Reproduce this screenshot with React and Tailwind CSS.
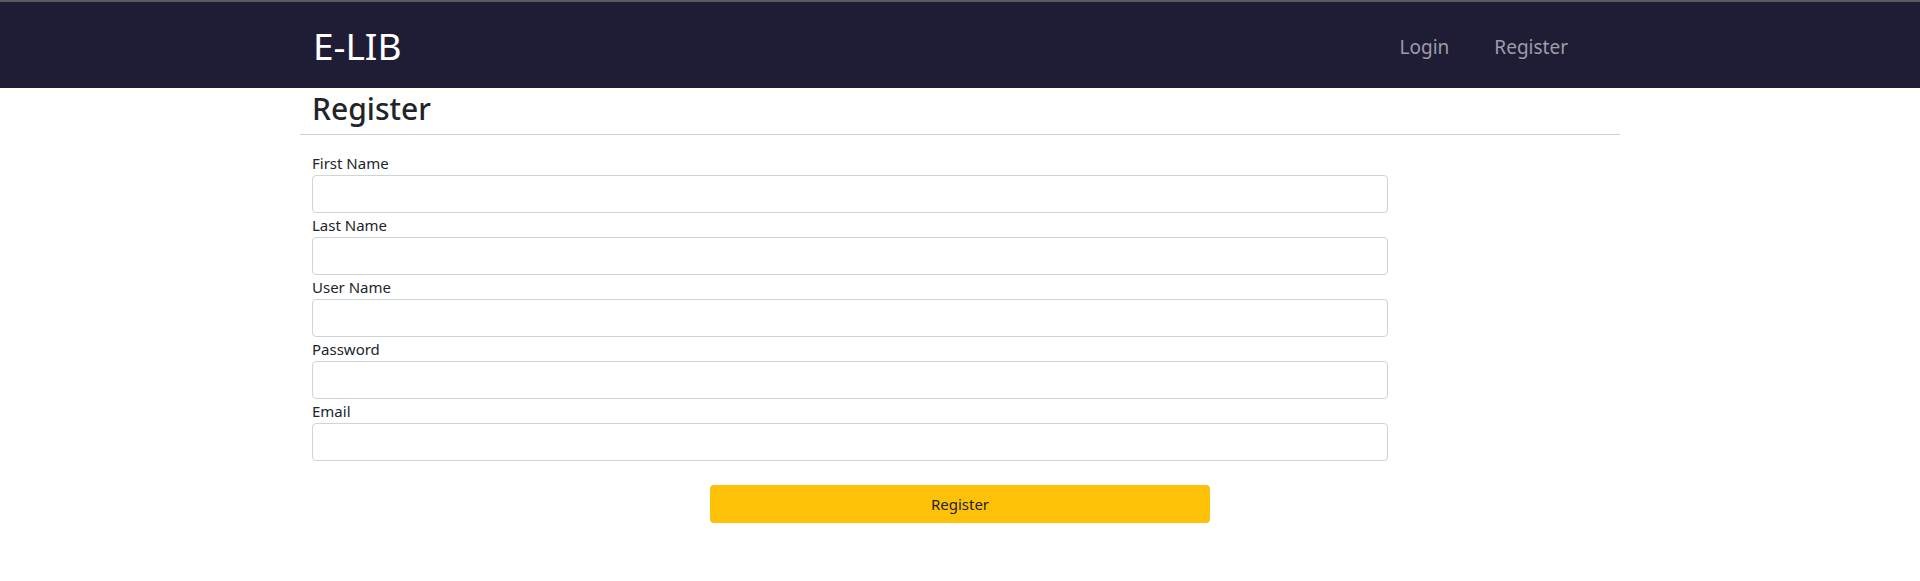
import React from 'react';

const FIELDS = ['First Name', 'Last Name', 'User Name', 'Password', 'Email'];

export default function App() {
  return (
    <div className="min-h-[581px] bg-white text-[#212529]" style={{ fontFamily: '"Noto Sans", "Open Sans", sans-serif' }}>
      <nav className="h-[88px] bg-[#1f1d36] border-t-2 border-[#5a5a5a]">
        <div className="w-[1320px] mx-auto px-3 h-full flex items-center justify-between">
          <a className="text-[37px] text-white pl-px leading-none">E-LIB</a>
          <div className="flex items-center gap-[45px] pr-[40px] text-[19px] text-[#9d9caa] mt-1">
            <a>Login</a>
            <a>Register</a>
          </div>
        </div>
      </nav>

      <div className="w-[1320px] mx-auto">
        <h2 className="px-3 text-[30px] font-medium leading-[42px] pb-1">Register</h2>
        <hr className="border-0 border-t border-[#cfcfcf]" />
        <form className="px-3 pt-[16px]" onSubmit={(e) => e.preventDefault()}>
          <div className="w-[1076px]">
            {FIELDS.map((f) => (
              <div key={f}>
                <label className="block text-[15px] leading-6">{f}</label>
                <input
                  type={f === 'Password' ? 'password' : 'text'}
                  className="block w-full h-[38px] border border-[#ced4da] rounded-[4px] px-3 outline-none"
                />
              </div>
            ))}
          </div>
          <div className="mt-[24px] flex justify-center">
            <button
              type="submit"
              className="w-[500px] h-[38px] bg-[#ffc107] rounded-[4px] text-[15px] text-[#212529]"
            >
              Register
            </button>
          </div>
        </form>
      </div>
    </div>
  );
}
